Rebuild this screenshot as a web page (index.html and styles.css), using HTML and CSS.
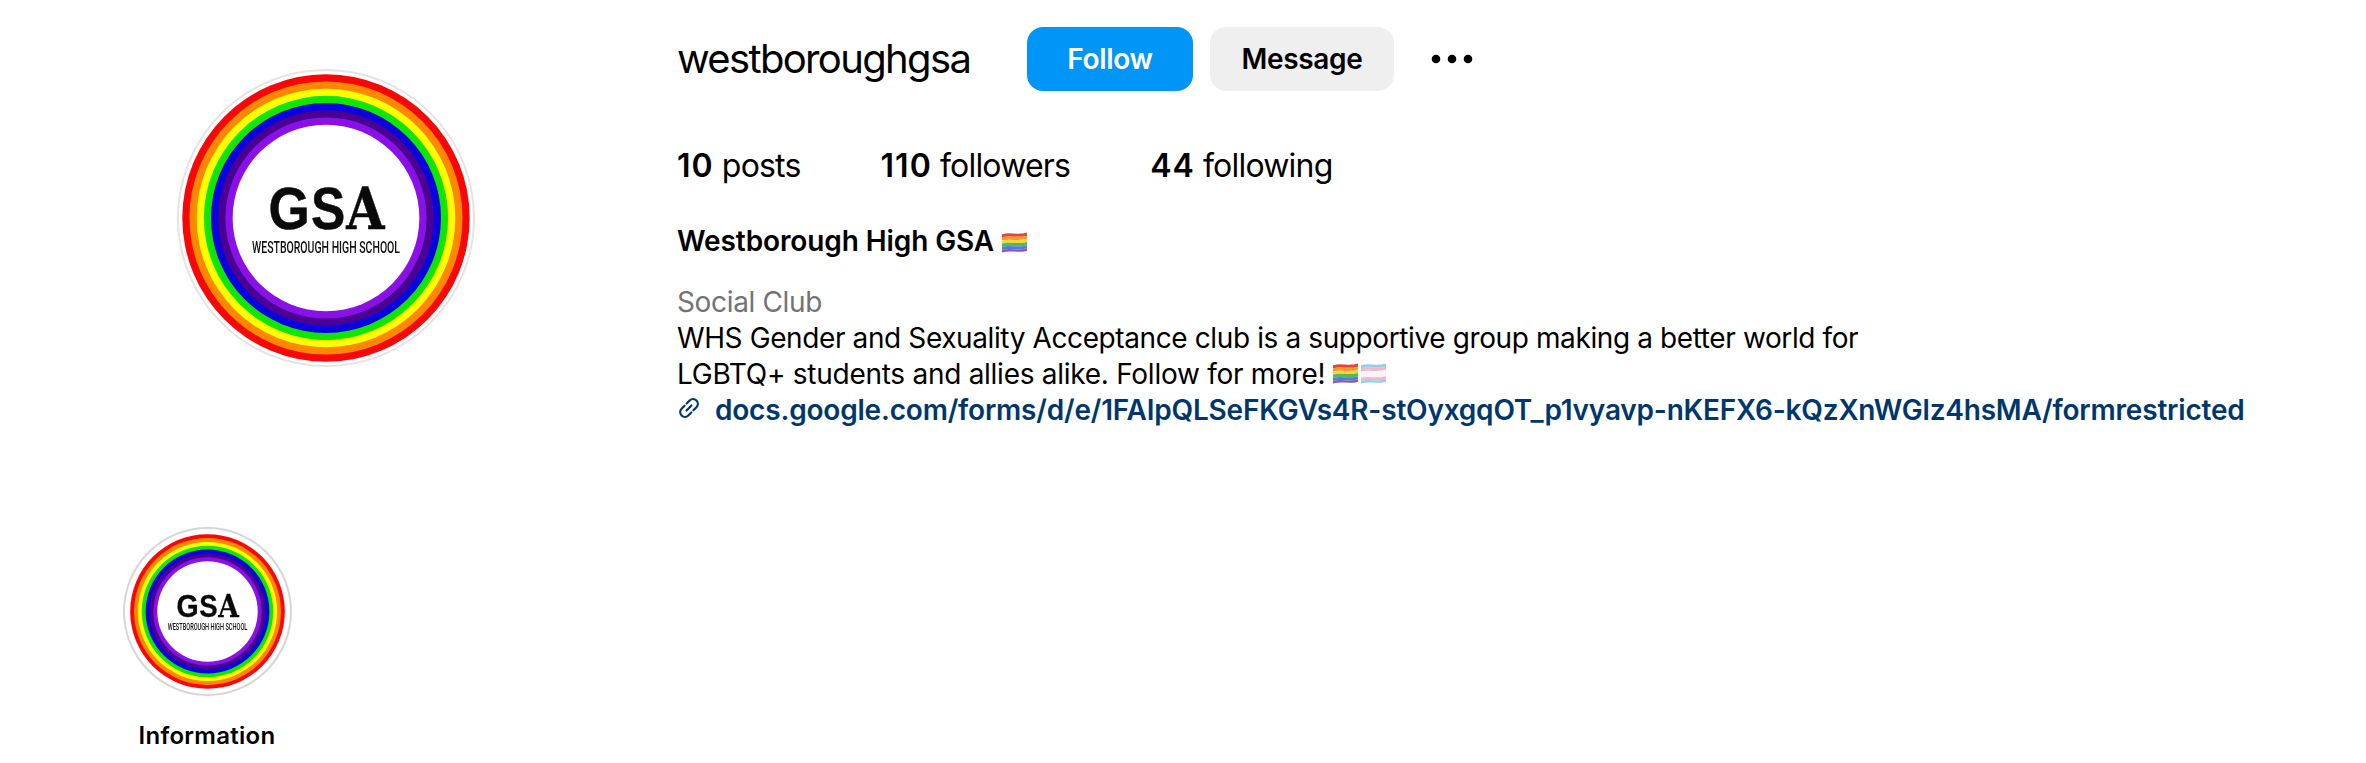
FILE: index.html
```html
<!DOCTYPE html>
<html lang="en">
<head>
<meta charset="utf-8">
<title>westboroughgsa</title>
<link rel="stylesheet" href="styles.css">
</head>
<body>
<svg class="defs" width="0" height="0" aria-hidden="true">
  <defs>
    <symbol id="gsa-logo" viewBox="6 6 286 286">
      <circle cx="149" cy="149" r="142.700" fill="#f70808"/>
      <circle cx="149" cy="149" r="135.600" fill="#ff8800"/>
      <circle cx="149" cy="149" r="128.400" fill="#ffff00"/>
      <circle cx="149" cy="149" r="121.300" fill="#11e600"/>
      <circle cx="149" cy="149" r="114.200" fill="#0a00e0"/>
      <circle cx="149" cy="149" r="107" fill="#4a0090"/>
      <circle cx="149" cy="149" r="99.900" fill="#8a10e8"/>
      <circle cx="149" cy="149" r="92.700" fill="#fff"/>
      <text x="92" y="160" class="logo-main" textLength="41" lengthAdjust="spacingAndGlyphs">G</text>
      <text x="134" y="160" class="logo-main" textLength="34" lengthAdjust="spacingAndGlyphs">S</text>
      <text x="169" y="160" class="logo-main logo-slab" textLength="38" lengthAdjust="spacingAndGlyphs">A</text>
      <text x="149" y="184" class="logo-sub" text-anchor="middle" textLength="147" lengthAdjust="spacingAndGlyphs">WESTBOROUGH HIGH SCHOOL</text>
    </symbol>
    <symbol id="pride" viewBox="0 0 25 21" preserveAspectRatio="none">
      <path d="M0 3C8 1 16 4 25 1.500V4.500C16 7 8 4 0 6z" fill="#e5433c"/>
      <path d="M0 6C8 4 16 7 25 4.500V7.500C16 10 8 7 0 9z" fill="#f39a2e"/>
      <path d="M0 9C8 7 16 10 25 7.500V10.500C16 13 8 10 0 12z" fill="#f5d63d"/>
      <path d="M0 12C8 10 16 13 25 10.500V13.500C16 16 8 13 0 15z" fill="#55b85c"/>
      <path d="M0 15C8 13 16 16 25 13.500V16.500C16 19 8 16 0 18z" fill="#4c7ede"/>
      <path d="M0 18C8 16 16 19 25 16.500V19C16 21 8 18.500 0 20.500z" fill="#8a55b8"/>
    </symbol>
    <symbol id="trans" viewBox="0 0 25 21" preserveAspectRatio="none">
      <path d="M0 3C8 1 16 4 25 1.500V4.500C16 7 8 4 0 6z" fill="#93cfe9"/>
      <path d="M0 6C8 4 16 7 25 4.500V7.500C16 10 8 7 0 9z" fill="#efb7c9"/>
      <path d="M0 9C8 7 16 10 25 7.500V10.500C16 13 8 10 0 12z" fill="#f8f3f5"/>
      <path d="M0 12C8 10 16 13 25 10.500V13.500C16 16 8 13 0 15z" fill="#f8f3f5"/>
      <path d="M0 15C8 13 16 16 25 13.500V16.500C16 19 8 16 0 18z" fill="#efb7c9"/>
      <path d="M0 18C8 16 16 19 25 16.500V19C16 21 8 18.500 0 20.500z" fill="#93cfe9"/>
    </symbol>
  </defs>
</svg>

<header class="profile">
  <div class="avatar-col">
    <div class="frame frame-avatar">
      <svg class="logo logo-avatar" role="img" aria-label="GSA logo"><use href="#gsa-logo"/></svg>
    </div>
  </div>
  <section class="info">
    <div class="title-row">
      <h1 class="username">westboroughgsa</h1>
      <div class="actions">
        <button class="btn btn-follow" type="button">Follow</button>
        <button class="btn btn-message" type="button">Message</button>
        <button class="more" type="button" aria-label="Options">
          <svg class="more-icon" viewBox="0 0 44 12"><circle cx="6" cy="6" r="4.300"/><circle cx="22" cy="6" r="4.300"/><circle cx="38" cy="6" r="4.300"/></svg>
        </button>
      </div>
    </div>
    <ul class="stats">
      <li><b>10</b> posts</li>
      <li><b>110</b> followers</li>
      <li><b>44</b> following</li>
    </ul>
    <h2 class="name">Westborough High GSA <svg class="flag"><use href="#pride"/></svg></h2>
    <div class="category">Social Club</div>
    <p class="bio">WHS Gender and Sexuality Acceptance club is a supportive group making a better world for<br><span class="bio-second">LGBTQ+ students and allies alike. Follow for more! </span><svg class="flag"><use href="#pride"/></svg><svg class="flag flag-next"><use href="#trans"/></svg></p>
    <a class="link" href="#">
      <svg class="link-icon" viewBox="0 0 24 24"><g transform="rotate(-45 12 12)"><path d="M10.500 7.250H6.250a4.750 4.750 0 0 0 0 9.500h4.250"/><path d="M13.500 7.250h4.250a4.750 4.750 0 0 1 0 9.500H13.500"/><path d="M8.500 12h7"/></g></svg>
      <span>docs.google.com/forms/d/e/1FAIpQLSeFKGVs4R-stOyxgqOT_p1vyavp-nKEFX6-kQzXnWGlz4hsMA/formrestricted</span>
    </a>
  </section>
</header>

<section class="highlights">
  <div class="highlight">
    <div class="frame frame-highlight">
      <svg class="logo logo-highlight" role="img" aria-label="Information highlight"><use href="#gsa-logo"/></svg>
    </div>
    <div class="highlight-label">Information</div>
  </div>
</section>
</body>
</html>
```
FILE: styles.css
```css
* { box-sizing: border-box; }
html, body { margin: 0; padding: 0; background: #fff; }
body {
  font-family: Inter, "Liberation Sans", sans-serif;
  color: #000;
  height: 763px;
  overflow: hidden;
}
.defs { position: absolute; }

.profile { display: flex; height: 527px; padding-top: 27px; }
.avatar-col { width: 677px; padding: 42px 0 0 177px; flex: none; }
.frame { display: flex; align-items: center; justify-content: center; border-radius: 50%; flex: none; }
.frame-avatar { width: 298px; height: 298px; border: 2px solid #e4e4e4; }
.frame-highlight { width: 169px; height: 169px; border: 2.5px solid #d6d6d6; }
.logo { display: block; }
.logo-avatar { width: 288px; height: 288px; filter: blur(0.4px); }
.logo-highlight { width: 155px; height: 155px; filter: blur(0.5px); }
.logo-main { font-family: "Liberation Sans", sans-serif; font-weight: 700; font-size: 58px; fill: #0a0a0a; stroke: #0a0a0a; stroke-width: 0.5px; }
.logo-slab { font-family: "DejaVu Serif", serif; }
.logo-sub { font-family: Roboto, "Liberation Sans", sans-serif; font-weight: 500; font-size: 15.5px; fill: #111; }

.info { flex: 1; min-width: 0; }
.title-row { display: flex; align-items: center; height: 64px; }
.username { flex: none; width: 350px; margin: 0; font-size: 40px; font-weight: 400; letter-spacing: -1.65px; line-height: 64px; }
.actions { display: flex; align-items: center; gap: 17px; }
.btn {
  height: 64px;
  border: 0;
  border-radius: 16px;
  font: 600 28px/36px Inter, "Liberation Sans", sans-serif;
  letter-spacing: -0.3px;
  padding: 0;
}
.btn-follow { width: 166px; background: #0095f6; color: #fff; }
.btn-message { width: 184px; background: #efefef; color: #000; }
.more { border: 0; background: none; padding: 0; margin-left: 19px; display: flex; }
.more-icon { width: 44px; height: 12px; fill: #000; display: block; }

.stats { display: flex; gap: 80px; list-style: none; margin: 57px 0 0; padding: 0; font-size: 32px; line-height: 36px; letter-spacing: -0.8px; }
.stats b { font-weight: 600; letter-spacing: 1px; }
.name { margin: 39px 0 0; font-size: 28px; line-height: 36px; font-weight: 600; letter-spacing: -0.1px; }
.flag { display: inline-block; width: 25px; height: 22px; vertical-align: 0.5px; }
.flag-next { margin-left: 3px; }
.name .flag { margin-left: 1px; vertical-align: -1.5px; }
.category { margin-top: 25px; font-size: 28px; line-height: 36px; color: #737373; letter-spacing: -0.35px; }
.bio { margin: 0; font-size: 28px; line-height: 36px; letter-spacing: -0.39px; }
.bio-second { letter-spacing: -0.27px; }
.link { display: flex; align-items: center; gap: 14px; font-size: 28px; line-height: 36px; font-weight: 600; color: #00376b; text-decoration: none; letter-spacing: -0.2px; white-space: nowrap; }
.link-icon { width: 24px; height: 24px; flex: none; margin-bottom: 4px; fill: none; stroke: #00376b; stroke-width: 2.200; stroke-linecap: round; }

.highlights { padding-left: 122px; }
.highlight { width: 170px; display: flex; flex-direction: column; align-items: center; }
.highlight-label { margin-top: 25px; font-size: 24px; line-height: 30px; font-weight: 600; letter-spacing: 0.27px; white-space: nowrap; }
```
